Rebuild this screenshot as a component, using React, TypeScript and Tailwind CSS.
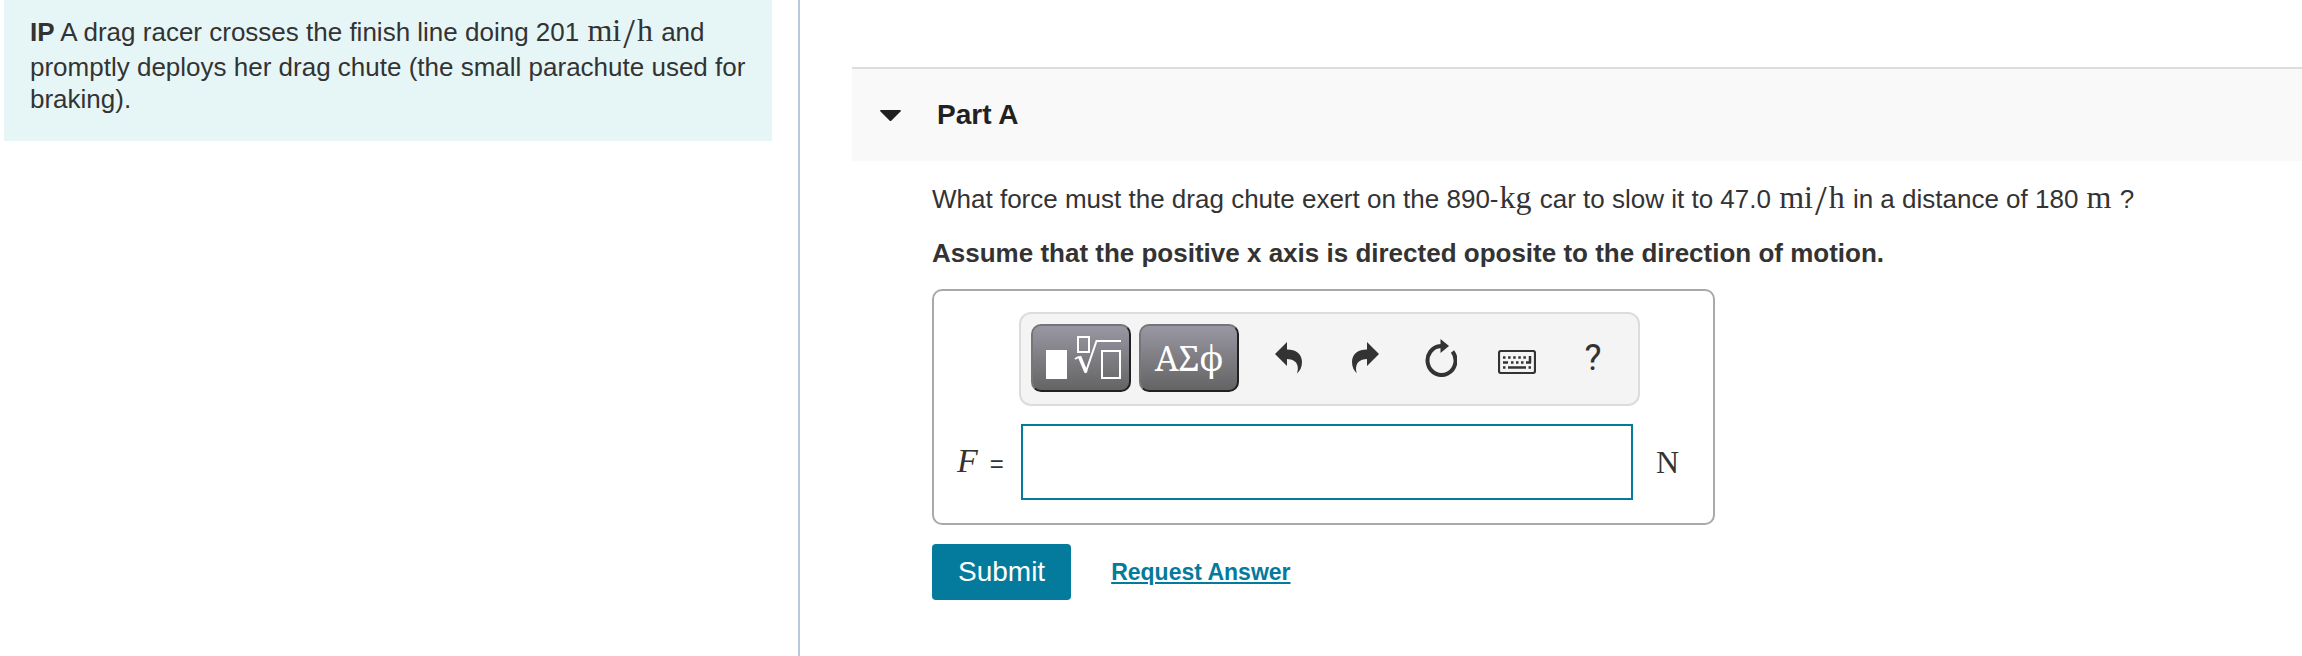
import React from 'react';

interface MathProps {
  children: React.ReactNode
}

// Units are typeset in a serif face that is slightly larger than the body text
const MathText: React.FC<MathProps> = (props: MathProps) => {
  return (
    <span className="inline-block px-px pb-[5px] font-['Liberation_Serif',serif] text-[32px] leading-8">
      {props.children}
    </span>
  );
};

const MilesPerHour = () => (
  <MathText>mi<span className="px-0.5 align-sub text-[42px] leading-0">/</span>h</MathText>
);

const TemplatesIcon = () => (
  <svg width="76" height="44" viewBox="0 0 76 44" fill="none" stroke="#fff" className="overflow-visible" aria-hidden="true">
    <rect x="3" y="14" width="21" height="29" fill="#fff" stroke="none" />
    <rect x="35" y="1" width="11" height="15" strokeWidth="2" />
    <path d="M32 23 L36.500 20.500" strokeWidth="2" />
    <path d="M36.500 20.500 L43 36" strokeWidth="3.500" />
    <path d="M42.500 37 L53.500 5 H78" strokeWidth="2" />
    <rect x="59" y="15" width="18" height="27" strokeWidth="2" />
  </svg>
);

const UndoIcon = () => (
  <svg width="28" height="32" viewBox="0 0 28 32" fill="#333" aria-hidden="true">
    <path d="M0 12 L12 0 V7.500 C21 7.500 27 12 27 20 C27 25 25 29 22 31.500 C24 26 23.500 17.500 12 17 V24 Z" />
  </svg>
);

const RedoIcon = () => (
  <svg width="28" height="32" viewBox="0 0 28 32" fill="#333" aria-hidden="true">
    <path d="M28 12 L16 0 V7.500 C7 7.500 1 12 1 20 C1 25 3 29 6 31.500 C4 26 4.500 17.500 16 17 V24 Z" />
  </svg>
);

const ResetIcon = () => (
  <svg width="32" height="38" viewBox="0 0 32 38" fill="none" aria-hidden="true">
    <path d="M16 7 A14 14.500 0 1 0 27.500 12.500" stroke="#333" strokeWidth="4" />
    <path d="M15.500 0 L24 7 L15.500 14 Z" fill="#333" />
  </svg>
);

const KeyboardIcon = () => (
  <svg width="38" height="24" viewBox="0 0 38 24" fill="none" stroke="#333" aria-hidden="true">
    <rect x="1" y="1" width="36" height="22" rx="2" strokeWidth="2.200" />
    <path d="M5 7.500 H30" strokeWidth="2.500" strokeDasharray="2.500 2.600" />
    <path d="M5 12.500 H10 M13 12.500 H15.500 M18 12.500 H20.500 M23 12.500 H25.500 M28 12.500 H33" strokeWidth="2.500" />
    <path d="M32 6 V13" strokeWidth="2.500" />
    <path d="M5 17.500 H7.500 M10 17.500 H28 M30.500 17.500 H33" strokeWidth="2.500" />
  </svg>
);

const paletteButton = "flex h-[68px] w-[100px] items-center justify-center rounded-[10px] border-2 border-t-[#767676] border-l-[#767676] border-r-[#212121] border-b-[#212121] bg-linear-to-b from-[#9a97a3] to-[#646464] text-white";
const iconButton = "flex h-[68px] w-[76px] items-center justify-center";

const Toolbar = () => (
  <div className="flex items-center rounded-xl border-2 border-[#dcdcdc] bg-[#f4f4f4] pt-[10px] pr-[7px] pb-3 pl-[10px]">
    <button className={paletteButton} aria-label="Templates">
      <TemplatesIcon />
    </button>
    <button className={`${paletteButton} ml-2 font-['Noto_Serif','Liberation_Serif',serif] text-[34px]`}>
      ΑΣϕ
    </button>
    <button className={`${iconButton} ml-3`} aria-label="Undo"><UndoIcon /></button>
    <button className={iconButton} aria-label="Redo"><RedoIcon /></button>
    <button className={iconButton} aria-label="Reset"><ResetIcon /></button>
    <button className={`${iconButton} pt-2`} aria-label="Keyboard shortcuts"><KeyboardIcon /></button>
    <button className={`${iconButton} font-[Roboto,sans-serif] text-4xl`}>?</button>
  </div>
);

const AnswerBox = () => (
  <div className="w-fit rounded-[10px] border-2 border-[#a9a9a9] pt-[21px] pr-[34px] pb-[23px] pl-[23px]">
    <div className="flex pl-[62px]">
      <Toolbar />
    </div>
    <div className="mt-[18px] flex items-center">
      <label htmlFor="force" className="flex w-16 items-baseline gap-3">
        <i className="font-['Liberation_Serif',serif] text-[34px] leading-8">F</i>
        <span className="text-2xl">=</span>
      </label>
      <input
        id="force"
        type="text"
        className="h-[76px] w-[612px] border-2 border-[#047a9c] bg-white px-3 outline-none"
      />
      <span className="ml-[23px] font-['Liberation_Serif',serif] text-[32px] leading-8">N</span>
    </div>
  </div>
);

const App: React.FC = () => {
  return (
    <div className="flex min-h-screen bg-white font-['Liberation_Sans',Arial,sans-serif] text-[26px] leading-8 text-[#333]">
      <aside className="w-full max-w-[800px] border-r-2 border-[#b9c9dc] pr-[26px] pl-1">
        <p className="bg-[#e6f6f7] px-[26px] pt-[14px] pb-[26px]">
          <b>IP</b> A drag racer crosses the finish line doing 201 <MilesPerHour /> and
          promptly deploys her drag chute (the small parachute used for braking).
        </p>
      </aside>

      <main className="min-w-0 flex-1 pt-[67px] pl-[52px]">
        <button className="flex w-full items-center gap-9 border-t-2 border-[#ddd] bg-[#f9f9f9] px-7 py-[30px] text-[#212121]" aria-expanded="true">
          <svg width="21" height="11" viewBox="0 0 21 11" fill="#212121" aria-hidden="true">
            <path d="M1 0 H20 Q21.500 0 20.500 1.500 L11.500 10.500 Q10.500 11.500 9.500 10.500 L0.500 1.500 Q-0.500 0 1 0 Z" />
          </svg>
          <h2 className="text-[28px] font-bold">Part A</h2>
        </button>

        <section className="px-20 pt-5">
          <p>
            What force must the drag chute exert on the 890-<MathText>kg</MathText> car to slow it to 47.0 <MilesPerHour /> in a distance of 180 <MathText>m</MathText> ?
          </p>
          <p className="mt-[19px] mb-5 font-bold">
            Assume that the positive x axis is directed oposite to the direction of motion.
          </p>
          <AnswerBox />
          <div className="mt-[19px] flex items-center gap-10">
            <button className="h-14 rounded bg-[#047a9c] px-[26px] text-[28px] text-white">Submit</button>
            <a href="#" className="text-[23px] font-bold text-[#047a9c] underline">Request Answer</a>
          </div>
        </section>
      </main>
    </div>
  );
};

export default App;
